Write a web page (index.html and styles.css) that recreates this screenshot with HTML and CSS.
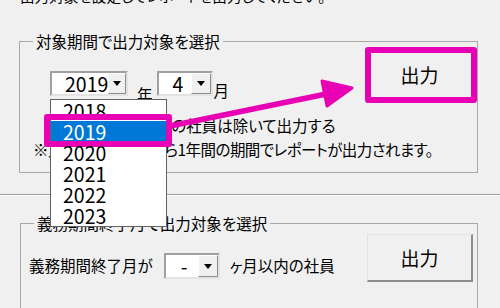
FILE: index.html
```html
<!DOCTYPE html>
<html lang="ja">
<head>
<meta charset="utf-8">
<title>レポート出力</title>
<link rel="stylesheet" href="styles.css">
</head>
<body>
<div class="window">
  <p class="top-text">出力対象を設定してレポートを出力してください。</p>

  <fieldset class="group group-period">
    <legend>対象期間で出力対象を選択</legend>
    <div class="group-body">
      <div class="controls">
        <div class="row row-date">
          <div class="combo combo-year">
            <span class="combo-value">2019</span>
            <span class="combo-btn"><span class="tri"></span></span>
            <ul class="dropdown-list">
              <li>2018</li>
              <li class="selected">2019</li>
              <li>2020</li>
              <li>2021</li>
              <li>2022</li>
              <li>2023</li>
            </ul>
          </div>
          <span class="unit unit-year">年</span>
          <div class="combo combo-month">
            <span class="combo-value">4</span>
            <span class="combo-btn"><span class="tri"></span></span>
          </div>
          <span class="unit unit-month">月</span>
        </div>
        <label class="row row-check"><span class="checkbox"></span>退職・休職中の社員は除いて出力する</label>
        <p class="row row-note">※入力された年月から1年間の期間でレポートが出力されます。</p>
      </div>
      <div class="btn-wrap highlighted"><button class="btn">出力</button></div>
    </div>
  </fieldset>

  <div class="separator"></div>

  <fieldset class="group group-term">
    <legend>義務期間終了月で出力対象を選択</legend>
    <div class="group-body">
      <div class="term-row">
        <span class="label">義務期間終了月が</span>
        <div class="combo combo-term">
          <span class="combo-value">-</span>
          <span class="combo-btn"><span class="tri"></span></span>
        </div>
        <span class="label">ヶ月以内の社員</span>
      </div>
      <div class="btn-wrap"><button class="btn">出力</button></div>
    </div>
  </fieldset>

  <svg class="callout-arrow" width="500" height="308" viewBox="0 0 500 308">
    <line x1="170" y1="126" x2="336" y2="92" stroke="#e800b5" stroke-width="5.5" stroke-linecap="round"/>
    <polygon points="322,81 352,88 327,106" fill="#e800b5" stroke="#e800b5" stroke-width="3" stroke-linejoin="round"/>
  </svg>
</div>
</body>
</html>
```

FILE: styles.css
```css
* { box-sizing: border-box; }

html, body {
  margin: 0;
  padding: 0;
  background: #f0f0f0;
}

body {
  width: 500px;
  height: 308px;
  overflow: hidden;
  font-family: "Noto Sans CJK JP", "Noto Sans", sans-serif;
  font-size: 15.5px;
  color: #000;
  font-feature-settings: "palt";
}

.window {
  position: relative;
  width: 500px;
  height: 308px;
  overflow: hidden;
}

.top-text {
  margin: -13px 0 0 0;
  padding-left: 20px;
  font-size: 14.6px;
  line-height: 18px;
  white-space: nowrap;
}

.group {
  margin: 0;
  padding: 0;
  border: 1px solid #a8a8a8;
  min-width: 0;
}

.group legend {
  padding: 0 3px;
  margin-left: 13px;
  line-height: 18px;
  background: #f0f0f0;
}

.group-period {
  margin: 27px 0 0 19px;
  width: 459px;
  height: 141px;
}

.group-body {
  display: flex;
  justify-content: space-between;
  align-items: flex-start;
}

.controls {
  flex: 1;
  min-width: 0;
  padding-left: 30px;
}

.row {
  margin: 0;
  display: flex;
  white-space: nowrap;
  line-height: 18px;
}

.row-date {
  margin-top: 21px;
  height: 25px;
  align-items: flex-start;
}

.unit { line-height: 18px; }
.unit-year { margin: 14px 4px 0 9px; }
.unit-month { margin: 10px 0 0 1px; }

.row-check {
  margin-top: 20px;
  align-items: center;
}

.checkbox {
  flex-shrink: 0;
  width: 13px;
  height: 13px;
  margin: 0 6px 0 17px;
  border: 1px solid #333;
  background: #fff;
}

.row-note {
  margin-top: 6px;
  margin-left: -17px;
  letter-spacing: -0.55px;
}

/* combo boxes */
.combo {
  position: relative;
  display: flex;
  flex-shrink: 0;
  height: 25px;
  background: #fff;
  border-style: solid;
  border-width: 2px;
  border-color: #a0a0a0 #e3e3e3 #e3e3e3 #a0a0a0;
  font-size: 19.5px;
  line-height: 21px;
}

.combo-value {
  flex: 1;
  padding-left: 13px;
}

.combo-btn {
  width: 20px;
  display: flex;
  align-items: center;
  justify-content: center;
  background: #f0f0f0;
  border-style: solid;
  border-width: 1px;
  border-color: #fff #8c8c8c #8c8c8c #fff;
}

.tri {
  width: 0;
  height: 0;
  border-left: 4.5px solid transparent;
  border-right: 4.5px solid transparent;
  border-top: 5px solid #000;
}

.combo-year { width: 78px; }
.combo-month { width: 56px; }
.combo-month .combo-value { padding-left: 14px; }

.combo-term {
  width: 56px;
  height: 26px;
  margin: 0 10px 0 11px;
}
.combo-term .combo-value { padding-left: 15px; }

/* open dropdown list */
.dropdown-list {
  position: absolute;
  z-index: 10;
  top: 26px;
  left: -2px;
  width: 117px;
  margin: 0;
  padding: 0;
  list-style: none;
  background: #fff;
  border: 1px solid #646464;
  font-size: 19.5px;
}

.dropdown-list li {
  position: relative;
  height: 21px;
  line-height: 21px;
  padding-left: 12px;
}

.dropdown-list li.selected {
  background: #0078d7;
  color: #fff;
}

.dropdown-list li.selected::after {
  content: "";
  position: absolute;
  top: -7px;
  bottom: -5px;
  left: -7px;
  right: -6px;
  border: 6px solid #e800b5;
  border-radius: 3px;
}

/* buttons */
.btn-wrap {
  position: relative;
  flex-shrink: 0;
  margin-right: 4px;
}

.group-period .btn-wrap { margin-top: 1px; }
.group-term .btn-wrap { margin-top: 2px; }

.btn {
  display: block;
  width: 106px;
  height: 48px;
  padding: 0;
  font-family: inherit;
  font-size: 19px;
  color: #000;
  background: #f0f0f0;
  border-style: solid;
  border-width: 1px 2px 2px 1px;
  border-color: #e3e3e3 #8c8c8c #8c8c8c #e3e3e3;
}

.btn-wrap.highlighted::after {
  content: "";
  position: absolute;
  top: -4px;
  bottom: -4px;
  left: -2px;
  right: -4px;
  border: 6px solid #e800b5;
  border-radius: 3px;
}

.separator {
  margin-top: 21px;
  height: 2px;
  border-top: 1px solid #a0a0a0;
  border-bottom: 1px solid #fff;
}

.group-term {
  margin: 18px 0 0 20px;
  width: 458px;
  height: 120px;
}

.term-row {
  margin-top: 21px;
  padding-left: 8px;
  display: flex;
  align-items: center;
  white-space: nowrap;
}

.label { line-height: 18px; margin-top: -2px; }

.callout-arrow {
  position: absolute;
  top: 0;
  left: 0;
  z-index: 5;
  pointer-events: none;
}
```
